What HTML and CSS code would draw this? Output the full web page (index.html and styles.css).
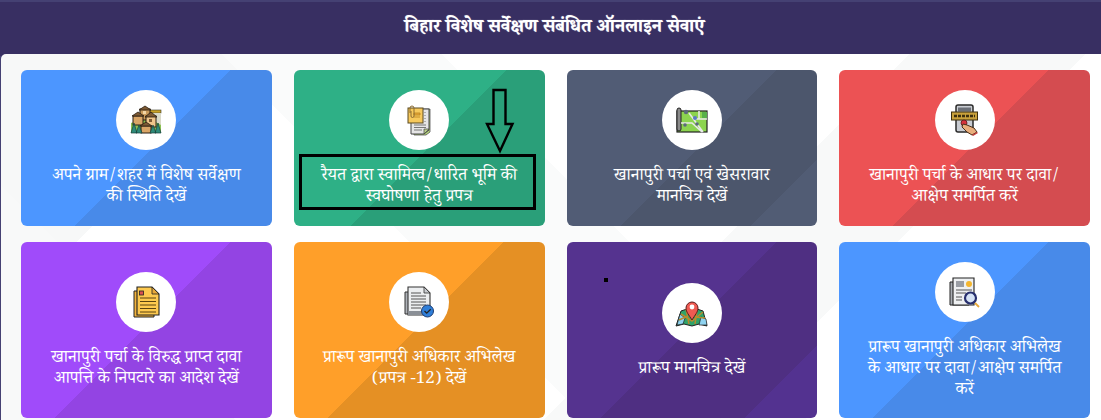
FILE: index.html
```html
<!DOCTYPE html>
<html lang="hi">
<head>
<meta charset="utf-8">
<title>बिहार विशेष सर्वेक्षण</title>
<link rel="stylesheet" href="styles.css">
</head>
<body>
<header class="header"><h1 class="title">बिहार विशेष सर्वेक्षण संबंधित ऑनलाइन सेवाएं</h1></header>
<main class="panel">
<div class="grid">
<a class="card blue">
<span class="circle"><svg class="icon" viewBox="0 0 34 34"><rect x="18" y="7" width="14" height="3" fill="#c9a227" stroke="#3a3a2a" stroke-width=".6"/><rect x="17" y="10" width="15" height="12" fill="#d9d9c8"/><path d="M2 30V20l8-3 10-2 12 7v8z" fill="#8cc152"/><rect x="11" y="6" width="10" height="11" fill="#c99a5b" stroke="#2b1e12"/><path d="M10 7l6-4 6 4z" fill="#7d5a34" stroke="#2b1e12" stroke-width=".8"/><rect x="14" y="8" width="3" height="3" fill="#f3d6a6"/><rect x="4" y="13" width="10" height="9" fill="#d9a566" stroke="#2b1e12"/><path d="M3 13l6-4 6 4z" fill="#7d5a34" stroke="#2b1e12" stroke-width=".8"/><rect x="17" y="13" width="10" height="11" fill="#efc58b" stroke="#2b1e12"/><path d="M16 14l6-5 6 5z" fill="#7d5a34" stroke="#2b1e12" stroke-width=".8"/><rect x="20" y="16" width="3" height="3" fill="#7d5a34"/><rect x="12" y="23" width="10" height="7" fill="#d9a566" stroke="#2b1e12"/><path d="M11 23l6-4 6 4z" fill="#7d5a34" stroke="#2b1e12" stroke-width=".8"/><path d="M2 30l3-10 3 10zM7 30l3-8 3 8zM21 30l3-8 3 8zM26 30l3-10 3 10z" fill="#2e8b7a" stroke="#17403a" stroke-width=".7"/></svg></span>
<span class="label">अपने ग्राम/शहर में विशेष सर्वेक्षण<br>की स्थिति देखें</span>
</a>
<a class="card green">
<span class="circle"><svg class="icon" viewBox="0 0 34 34"><path d="M12 6h16v23l-4 3H12z" fill="#b5d67a" stroke="#555" stroke-width=".8"/><path d="M9 6h18v21l-5 4H9z" fill="#e6e6e6" stroke="#444"/><path d="M22 31v-5h5z" fill="#b9cf8a" stroke="#444" stroke-width=".7"/><path d="M12 22h12M12 24.500h12M12 27h8M23 9v1M23 12v1M23 15v1M23 18v1" stroke="#777" stroke-width="1"/><rect x="6" y="5" width="15" height="15" fill="#f7c95c" stroke="#5a4a20"/><path d="M12 10h6v2h-6zM12 14h6" fill="#e8a93a" stroke="#b98320" stroke-width=".8"/><path d="M8 10V5a2 2 0 0 1 4 0v8a1.500 1.500 0 0 1-3 0V8" fill="none" stroke="#8a6a30" stroke-width="1"/></svg></span>
<span class="label">रैयत द्वारा स्वामित्व/धारित भूमि की<br>स्वघोषणा हेतु प्रपत्र</span>
</a>
<a class="card slate">
<span class="circle"><svg class="icon" viewBox="0 0 34 34"><rect x="2" y="8" width="30" height="21" fill="#8cd44f" stroke="#222" stroke-width="1.200"/><rect x="2" y="5" width="4" height="23" rx="2" fill="#8a8a8a" stroke="#222"/><path d="M6 20h11l10 9M14 10l14 19M24 8v8h8M18 16h6" fill="none" stroke="#e8e8e8" stroke-width="1.600"/><rect x="27" y="9" width="5" height="6" fill="#58b04a"/><circle cx="11" cy="9" r="2.200" fill="#5d6a7c"/><circle cx="20" cy="15" r="2" fill="#5a78c8"/><circle cx="10" cy="22" r="1.800" fill="#5d6a7c"/><circle cx="22" cy="21" r="1.800" fill="#5d6a7c"/></svg></span>
<span class="label">खानापुरी पर्चा एवं खेसरावार<br>मानचित्र देखें</span>
</a>
<a class="card red">
<span class="circle"><svg class="icon" viewBox="0 0 34 34"><rect x="8" y="2" width="17" height="27" rx="2" fill="#c9ccd2" stroke="#2a2a2a" stroke-width="1.500"/><rect x="10" y="4.500" width="13" height="4" fill="#6c7078"/><rect x="3.500" y="9" width="26" height="8" fill="#c9a13b" stroke="#3d2f0e"/><path d="M6 13h21" stroke="#3d2f0e" stroke-width="2.600" stroke-dasharray="3 1"/><circle cx="16" cy="20" r="3" fill="#d8323c" stroke="#5a1a1a" stroke-width=".8"/><path d="M15 21l4 1 7 3 3 4-5 3-5-3-5-5z" fill="#e9ae7c" stroke="#4a2f18"/><path d="M24 32l5-3 1 1-5 3z" fill="#c63a3a"/></svg></span>
<span class="label">खानापुरी पर्चा के आधार पर दावा/<br>आक्षेप समर्पित करें</span>
</a>
<a class="card violet">
<span class="circle"><svg class="icon" viewBox="0 0 34 34"><path d="M5 6h20v26H5z" fill="#f2b33d" stroke="#222"/><path d="M8 2h15l7 7v21H8z" fill="#fdc94f" stroke="#222" stroke-width="1.100"/><path d="M23 2v7h7z" fill="#e8a93a" stroke="#222" stroke-width=".8"/><rect x="10.500" y="6" width="4" height="4" fill="#d9534f" stroke="#222" stroke-width=".8"/><path d="M11 13h16M11 16.500h16M11 20h16M11 23.500h16M11 27h16" stroke="#5a4310" stroke-width="1.200"/></svg></span>
<span class="label">खानापुरी पर्चा के विरुद्ध प्राप्त दावा<br>आपत्ति के निपटारे का आदेश देखें</span>
</a>
<a class="card orange">
<span class="circle"><svg class="icon" viewBox="0 0 34 34"><path d="M3 7h19v22H3z" fill="#aeb2b8" stroke="#333"/><path d="M6 2h16l6 6v22H6z" fill="#eceef0" stroke="#333" stroke-width="1.100"/><path d="M22 2v6h6z" fill="#c9ccd0" stroke="#333" stroke-width=".8"/><path d="M9 8h10M9 11h15M9 14h15M9 17h15M9 20h15M9 23h10" stroke="#555" stroke-width="1"/><rect x="6" y="26" width="15" height="4" fill="#8a8f96"/><circle cx="25.500" cy="26" r="6" fill="#2f7ed8" stroke="#1a3a70"/><path d="M22.500 26l2.200 2.200 4-4" fill="none" stroke="#222" stroke-width="1.300"/></svg></span>
<span class="label">प्रारूप खानापुरी अधिकार अभिलेख<br>(प्रपत्र -12) देखें</span>
</a>
<a class="card plum">
<span class="circle"><svg class="icon" viewBox="0 0 34 34"><path d="M6 15l6-2 10 0 6 2 4 15-8-2-7 2-8-2-8 2z" fill="#2fa36a" stroke="#222"/><path d="M2 29l3-11 5 4-2 6zM24 29l2-8 5 2 1 6z" fill="#8fd3f0" stroke="#222" stroke-width=".7"/><path d="M6 18l11 7 11-9M11 13l3 15M22 14l-2 14M4 24l9-4M20 21l10 1" fill="none" stroke="#b98a2c" stroke-width="1.500"/><path d="M17 24c-3-5-6-8-6-12a6 6 0 0 1 12 0c0 4-3 7-6 12z" fill="#ee5a52" stroke="#5a1a1a"/><circle cx="17" cy="11" r="2.400" fill="#fff"/></svg></span>
<span class="label">प्रारूप मानचित्र देखें</span>
</a>
<a class="card blue">
<span class="circle"><svg class="icon" viewBox="0 0 34 34"><path d="M2 7h19v23H2z" fill="#a9adb3" stroke="#222"/><path d="M5 3h21v27H5z" fill="#eef0f2" stroke="#222" stroke-width="1.100"/><rect x="8" y="6" width="8" height="6" fill="#9a9ea5"/><circle cx="21" cy="9" r="3" fill="#f4b62f"/><path d="M8 15h16M8 18h10M8 22h6M8 25h6" stroke="#555"/><circle cx="22.500" cy="23" r="5.500" fill="#d6e3f5" stroke="#28306e" stroke-width="2.200"/><path d="M27 28l4 4" stroke="#e8a93a" stroke-width="1.800"/></svg></span>
<span class="label">प्रारूप खानापुरी अधिकार अभिलेख<br>के आधार पर दावा/आक्षेप समर्पित<br>करें</span>
</a>
</div>
</main>
<div class="mark-box"></div>
<svg class="mark-arrow" viewBox="0 0 30 66"><path d="M8.500 2h12v34h7L15 63 2 36h6.500z" fill="none" stroke="#000" stroke-width="2.400"/></svg>
<span class="mark-dot"></span>
</body>
</html>
```
FILE: styles.css
```css
html, body { margin: 0; height: 100%; }
body {
  position: relative;
  overflow: hidden;
  background: #454173;
  font-family: "Noto Serif Devanagari", "Noto Sans Devanagari", "Lohit Devanagari", "Noto Sans", "Liberation Serif", serif;
}
.header {
  box-sizing: border-box;
  height: 54px;
  margin-top: 2px;
  display: flex;
  align-items: center;
  justify-content: center;
  background: #382f62;
}
.title {
  margin: 0;
  padding-left: 8px;
  color: #fff;
  font-size: 18.300px;
  font-weight: 700;
  text-shadow: 0 0 1px rgba(255,255,255,.6);
}
.panel {
  margin: -2px 0 0 1px;
  height: 366px;
  box-sizing: border-box;
  padding: 16px 11px 0 20px;
  border-radius: 5px 0 0 0;
  background:
    linear-gradient(135deg, transparent 0 62%, #f8f9f9 62% 74%, transparent 74%),
    linear-gradient(45deg, #f8f9f9 0 16%, transparent 16% 40%, #fafbfb 40% 55%, transparent 55%),
    linear-gradient(135deg, #f7f8f8 0 18%, #fff 18%);
}
.grid {
  display: grid;
  grid-template-columns: repeat(4, 1fr);
  grid-template-rows: 156px 176px;
  gap: 16px 22px;
}
.card {
  display: flex;
  flex-direction: column;
  align-items: center;
  justify-content: center;
  gap: 14px;
  border-radius: 6px;
  color: #fff;
  text-align: center;
}
.circle {
  flex: none;
  width: 60px;
  height: 60px;
  border-radius: 50%;
  background: #fff;
  display: flex;
  align-items: center;
  justify-content: center;
}
.icon { width: 34px; height: 34px; display: block; }
.label { font-size: 17px; line-height: 21px; white-space: nowrap; position: relative; top: 3px; }
.blue { background: linear-gradient(135deg, transparent 0 148px, #488ae9 148px), linear-gradient(#4c96ff, #4c96ff); }
.green { background: linear-gradient(135deg, transparent 0 150px, #2a9f79 150px), linear-gradient(#2eb086, #2eb086); }
.slate { background: linear-gradient(135deg, transparent 0 148px, #4c566c 148px 240px, #515c74 240px), linear-gradient(#515c75, #515c75); }
.red { background: linear-gradient(135deg, transparent 0 148px, #d44c50 148px), linear-gradient(#ec5254, #ec5254); }
.violet { background: linear-gradient(135deg, transparent 0 148px, #9344e3 148px), linear-gradient(#a04bfa, #a04bfa); }
.orange { background: linear-gradient(135deg, transparent 0 148px, #e59024 148px), linear-gradient(#ff9f29, #ff9f29); }
.plum { background: linear-gradient(135deg, transparent 0 148px, #4f2f82 148px 250px, #533290 250px), linear-gradient(#55338f, #55338f); }
.mark-box {
  position: absolute;
  left: 299px;
  top: 154px;
  width: 231px;
  height: 50px;
  border: 3px solid #000;
}
.mark-arrow {
  position: absolute;
  left: 485px;
  top: 88px;
  width: 30px;
  height: 66px;
}
.mark-dot {
  position: absolute;
  left: 604px;
  top: 278px;
  width: 4px;
  height: 4px;
  background: #000;
}
```
